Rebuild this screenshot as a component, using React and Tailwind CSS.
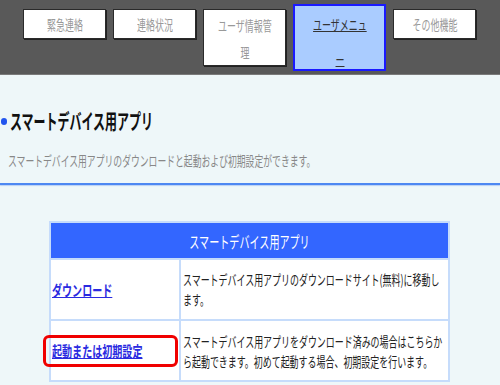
import React from "react";

const S = ({ children, className = "" }) => (
  <span className={`inline-block whitespace-nowrap ${className}`}>{children}</span>
);

function NavBtn({ children, className = "" }) {
  return (
    <div
      className={`w-[83px] h-[30px] bg-white border border-[#2a2a2a] shadow-[1px_1px_0_#222] flex items-center justify-center text-[14px] text-[#999] ${className}`}
    >
      <S className="origin-center scale-x-[0.64]">{children}</S>
    </div>
  );
}

export default function App() {
  return (
    <div className="w-[500px] h-[385px] overflow-hidden bg-[#eef7f9] font-['Noto_Sans_CJK_JP','Liberation_Sans',sans-serif]">
      <div className="h-[75px] bg-[#595959] border-b border-[#7a7a7a] flex items-start gap-[7px] pl-[23px] pt-[9px]">
        <NavBtn>緊急連絡</NavBtn>
        <NavBtn>連絡状況</NavBtn>
        <div className="w-[83px] h-[57px] bg-white border border-[#2a2a2a] shadow-[1px_1px_0_#222] flex flex-col items-center pt-[2px] text-[14px] leading-[27px] text-[#999]">
          <S className="origin-center scale-x-[0.64]">ユーザ情報管</S>
          <S className="origin-center scale-x-[0.64]">理</S>
        </div>
        <div className="-mt-[5px] w-[93px] h-[67px] bg-[#aaccff] border-2 border-[#1a1aff] flex flex-col items-center pt-[1px] text-[14px] leading-[35px] text-[#333]">
          <S className="origin-center scale-x-[0.64] underline">ユーザメニュ</S>
          <S className="origin-center scale-x-[0.64] underline">ー</S>
        </div>
        <NavBtn className="w-[82px]">その他機能</NavBtn>
      </div>

      <div className="mt-[33px] flex items-center h-[26px]">
        <div className="ml-[1px] w-[6px] h-[7px] rounded-full bg-[#2255ee]" />
        <S className="ml-[3px] origin-left text-[21px] font-bold text-[#111] scale-x-[0.57]">
          スマートデバイス用アプリ
        </S>
      </div>
      <div className="mt-[16px] pl-[8px] h-[20px] leading-[20px] text-[14px] text-[#888]">
        <S className="origin-left scale-x-[0.63]">
          スマートデバイス用アプリのダウンロードと起動および初期設定ができます。
        </S>
      </div>
      <div className="mt-[13px] h-[2px] bg-[#4d88f2] shadow-[0_1px_1px_#b8d0f5]" />

      <div className="mt-[36px] ml-[49px] w-[401px] border-2 border-[#c6dcfb] bg-white">
        <div className="h-[35px] bg-[#3366ff] flex items-center justify-center text-[16px] text-white">
          <S className="origin-center scale-x-[0.63]">スマートデバイス用アプリ</S>
        </div>
        <div className="grid grid-cols-[130px_269px] border-t-2 border-[#c6dcfb] h-[61px]">
          <div className="border-r-2 border-[#c6dcfb] flex items-center pl-[1px] pt-[2px]">
            <S className="origin-left scale-x-[0.67] text-[15px] font-bold text-[#2a2ae0] underline">
              ダウンロード
            </S>
          </div>
          <div className="flex flex-col justify-center pl-[2px] pb-[2px] text-[14px] leading-[20px] text-[#222]">
            <S className="origin-left scale-x-[0.64]">
              スマートデバイス用アプリのダウンロードサイト(無料)に移動し
            </S>
            <S className="origin-left scale-x-[0.64]">ます。</S>
          </div>
        </div>
        <div className="grid grid-cols-[130px_269px] border-t-2 border-[#c6dcfb] h-[61px]">
          <div className="relative border-r-2 border-[#c6dcfb] flex items-center pl-[1px] pt-[2px]">
            <S className="origin-left scale-x-[0.67] text-[15px] font-bold text-[#2a2ae0] underline">
              起動または初期設定
            </S>
            <div className="absolute left-[-8px] top-[14px] w-[135px] h-[32px] border-[3px] border-[#f00000] rounded-[6px]" />
          </div>
          <div className="flex flex-col justify-center pl-[2px] text-[14px] leading-[20px] text-[#222]">
            <S className="origin-left scale-x-[0.64]">
              スマートデバイス用アプリをダウンロード済みの場合はこちらか
            </S>
            <S className="origin-left scale-x-[0.64]">
              ら起動できます。初めて起動する場合、初期設定を行います。
            </S>
          </div>
        </div>
      </div>
    </div>
  );
}
